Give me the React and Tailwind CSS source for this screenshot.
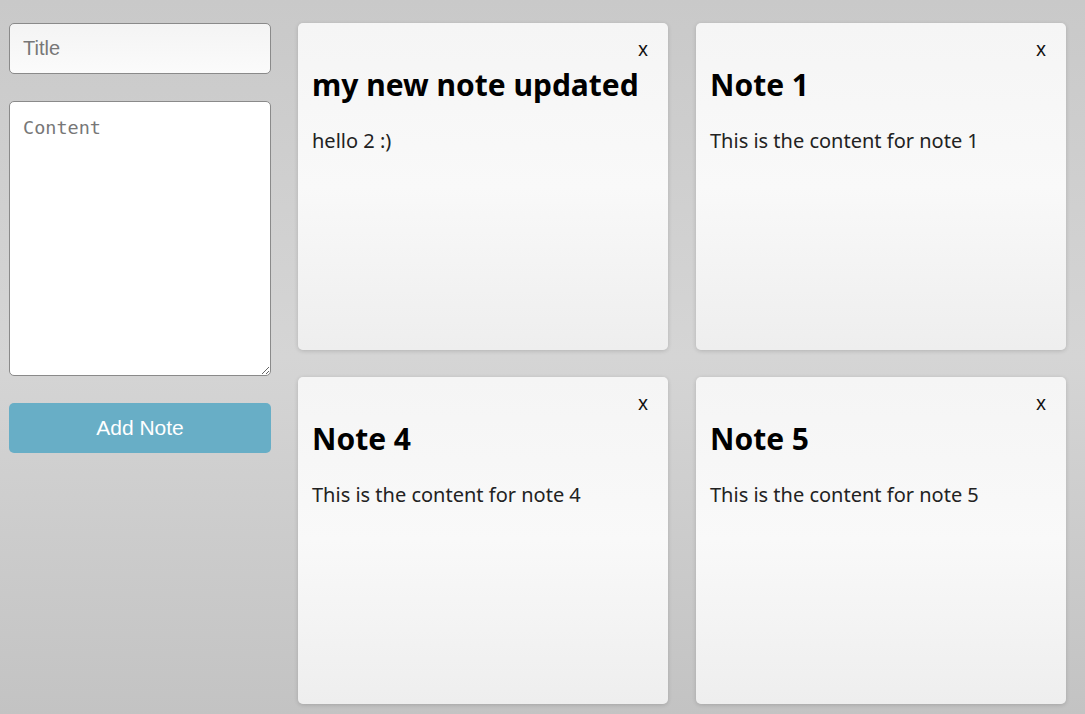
import React, { useState } from 'react'

const initialNotes = [
  { id: 2, title: 'my new note updated', content: 'hello 2 :)' },
  { id: 1, title: 'Note 1', content: 'This is the content for note 1' },
  { id: 4, title: 'Note 4', content: 'This is the content for note 4' },
  { id: 5, title: 'Note 5', content: 'This is the content for note 5' },
]

function NoteCard({ note, onDelete }) {
  return (
    <div className="h-[327px] rounded-[5px] bg-gradient-to-b from-[#f5f5f5] via-[#f9f9f9] to-[#eeeeee] shadow-[0_1px_4px_rgba(0,0,0,0.16)] px-[14px] pt-[16px] font-['Noto_Sans',sans-serif] text-black">
      <div className="flex justify-end pr-[6px]">
        <button onClick={() => onDelete(note.id)} className="text-[19px] leading-[20px] text-[#111]">
          x
        </button>
      </div>
      <h2 className="mt-[6px] text-[30px] leading-[40px] font-bold">{note.title}</h2>
      <p className="mt-[22px] text-[20px] leading-[28px] text-[#222]">{note.content}</p>
    </div>
  )
}

export default function App() {
  const [notes, setNotes] = useState(initialNotes)
  const [title, setTitle] = useState('')
  const [content, setContent] = useState('')

  const addNote = () => {
    if (!title && !content) return
    setNotes([...notes, { id: Date.now(), title, content }])
    setTitle('')
    setContent('')
  }

  const deleteNote = (id) => {
    setNotes(notes.filter(n => n.id !== id))
  }

  return (
    <div className="min-h-[714px] w-[1085px] bg-gradient-to-b from-[#c9c9c9] via-[#d5d5d5] to-[#c3c3c3] flex items-start pl-[9px] pt-[23px]">
      {/* form column */}
      <div className="w-[262px] flex flex-col gap-[27px]">
        <input
          value={title}
          onChange={e => setTitle(e.target.value)}
          placeholder="Title"
          className="h-[51px] rounded-[5px] border border-[#8a8a8a] bg-gradient-to-b from-[#f4f4f4] to-[#fbfbfb] px-[13px] text-[20px] font-['Liberation_Sans',sans-serif] placeholder:text-[#777] outline-none"
        />
        <textarea
          value={content}
          onChange={e => setContent(e.target.value)}
          placeholder="Content"
          className="h-[275px] rounded-[5px] border border-[#8a8a8a] bg-white px-[13px] pt-[14px] text-[18.5px] leading-[24px] font-['DejaVu_Sans_Mono',monospace] placeholder:text-[#777] outline-none resize-y"
        />
        <button
          onClick={addNote}
          className="h-[50px] rounded-[5px] bg-[#68aec6] text-white text-[21px] font-['Liberation_Sans',sans-serif]"
        >
          Add Note
        </button>
      </div>

      {/* notes grid */}
      <div className="ml-[27px] grid grid-cols-[370px_370px] gap-x-[28px] gap-y-[27px]">
        {notes.map(note => (
          <NoteCard key={note.id} note={note} onDelete={deleteNote} />
        ))}
      </div>
    </div>
  )
}
